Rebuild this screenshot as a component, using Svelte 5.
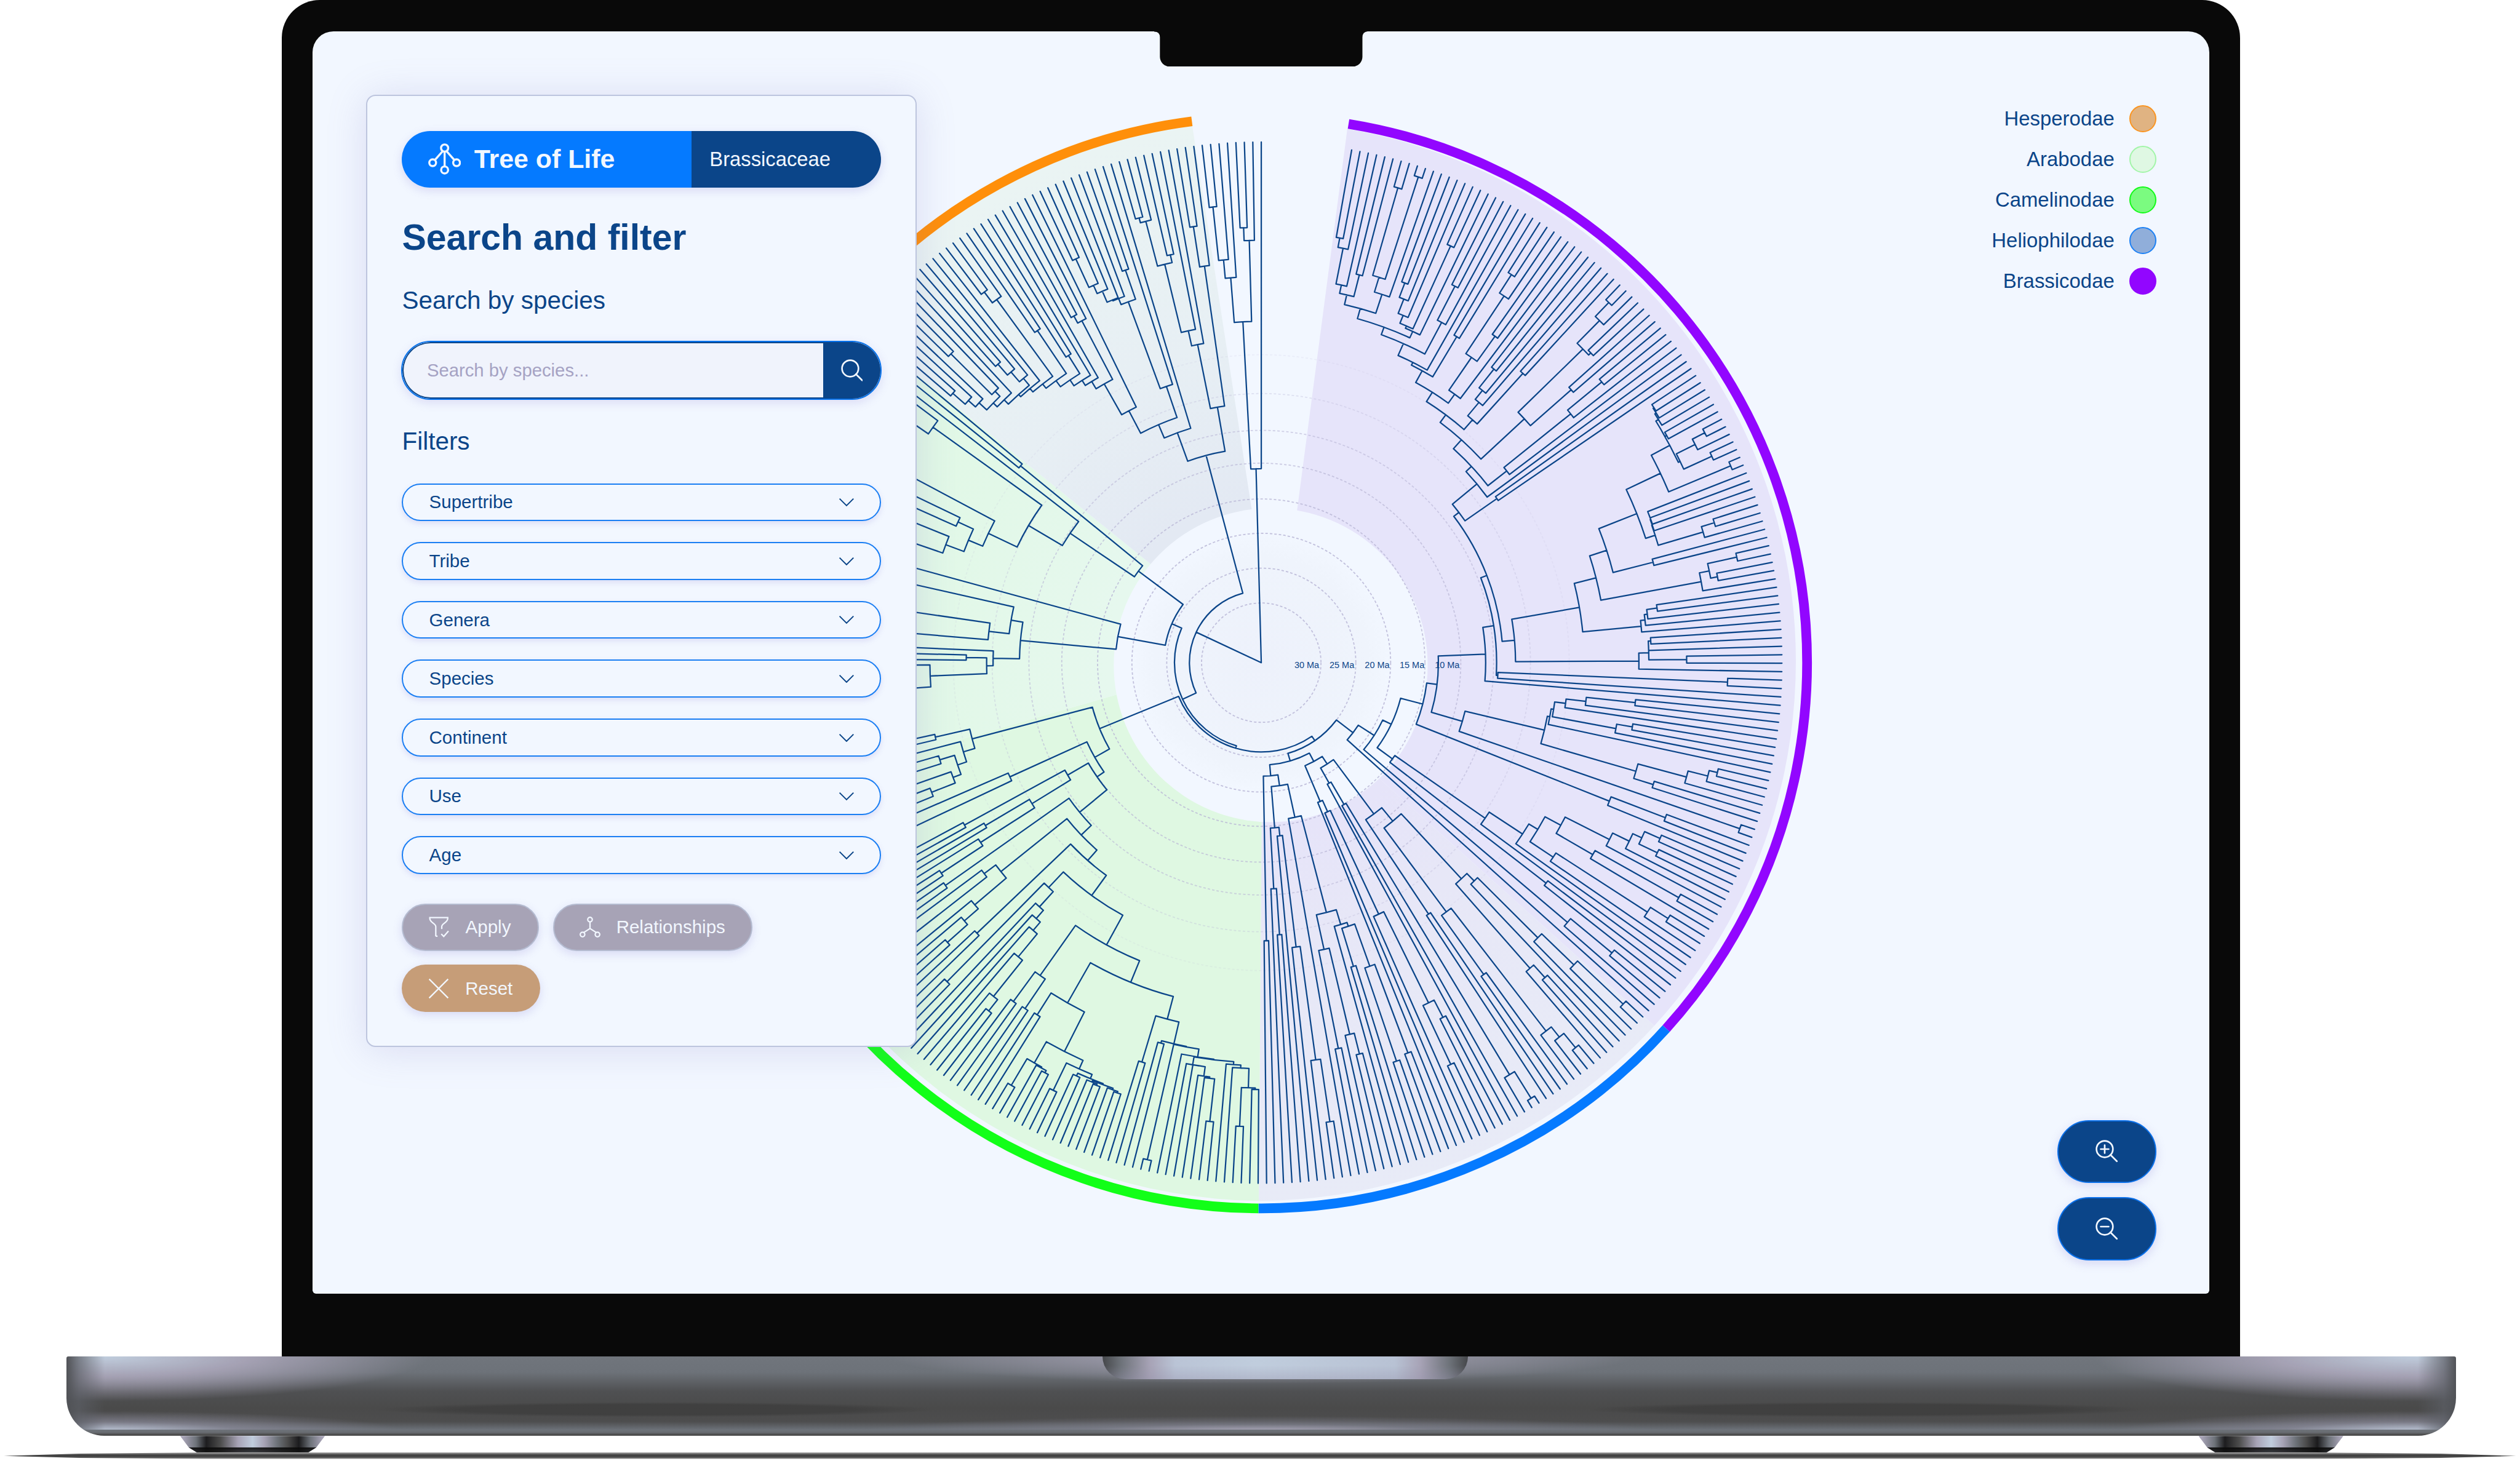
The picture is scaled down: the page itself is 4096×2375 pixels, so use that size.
<script>
  // Radial cladogram of the Brassicaceae family.
  // Notation: "o" is a leaf, "(ab)r" joins subtrees at radius r,
  // "@deg" is a leaf placed at an explicit clockwise angle.
  const LEAVES = 377;
  const START = 10;
  const STEP = 350 / (LEAVES - 1);
  const TIP = 1046.5;
  const CX = 2535;
  const CY = 1331;

  // Brassicodae, north-east
  const b1 = '((((oo)868o)849o)776(oo)804)759';
  const b2 = `(${b1}(((oo)993(oo)1026)810o)779)739`;
  const b3 = '(((((oo)816o)785o)754(oo)920)737o)732';
  const b4 = `(${b2}${b3})718`;
  const b5 = `(${b4}((oo)851o)774)702`;
  const b6 = `((${b5}o)676(oo)764)670`;
  const b7 = `(${b6}((((oo)928o)884(oo)807)745o)665)643`;
  const b8 = `(${b7}((((oo)753o)705o)682(oo)784)647)621`;
  const b9 = `(${b8}((((oo)1006o)967(oo)909)903(oo)830)721)602`;
  const b10 = `((${b9}(((oo)887o)798o)626)578o)563`;
  const b11 = `(${b10}(oo)577)499`;

  // Brassicodae, east
  const e1 = '((((((oo)941o)939o)936(oo)934)930(((oo)1004o)976(oo)996)934)930(oo)1023)888';
  const e2 = `(${e1}((((oo)834o)834o)833((oo)953o)926)832)812`;
  const e3 = `((${e2}(oo)813)730(((oo)979(oo)933)919o)899)694`;
  const e4 = `(${e3}((((oo)803o)782o)776o)767)649`;
  const e5 = `(${e4}((((oo)784o)779(oo)855)779o)759)511`;
  const b12 = `(((${b11}${e5})486((oo)938o)476)473o)451`;

  // Brassicodae, south-east
  const s1 = '((((oo)756o)657o)617((oo)757o)725)595';
  const s2 = `((${s1}o)590((((oo)943o)926o)885(oo)825)784)585`;
  const b13 = `(${b12}(${s2}(oo)1018)421)356`;
  const b14 = `(${b13}((oo)870o)753)335`;
  const s3 = '(((((((oo)876(oo)883)842o)822o)785((oo)963o)770)685(((oo)966o)924o)705)649o)628';
  const b15 = `(${b14}((${s3}o)548(oo)724)327)289`;
  const b16 = `((${b15}((oo)915o)807)270o)232`;

  // Heliophilodae
  const h1 = '(((((oo)1000o)874o)784o)613((oo)852o)818)592';
  const h2 = `((${h1}((((oo)999o)962o)936(oo)770)624)414(oo)607)379`;
  const h3 = `(${h2}((((oo)1030o)967o)330o)278)243`;
  const h4 = `(${h3}(((((oo)801(oo)893)762o)558o)328o)303)225`;
  const h5 = '((((oo)838(oo)846)648(oo)638)558o)550';
  const h6 = `((${h5}(((oo)811o)768(oo)791)590)519o)318`;
  const h7 = `(${h6}(((((oo)933o)806o)576o)350((oo)548o)455)333)250`;
  const b17 = `(${b16}(${h4}(${h7}(oo)559)228)206)190`;

  // Camelinodae
  const g1 = '((((oo)858(oo)933)855o)816o)810';
  const g2 = `(${g1}(((((oo)928o)842o)839o)820o)820)804`;
  const g3 = `(((${g2}o)803(oo)1025)787(oo)791)786`;
  const g4 = `(${g3}(oo)838)741`;
  const g5 = '((((((oo)912o)909((oo)912o)909)906(oo)910)904(oo)956)895(((oo)932o)927(oo)987)925)876';
  const g6 = `(${g4}(${g5}(oo)839)787)694`;
  const g7 = `(${g6}((oo)842(oo)844)770)647`;
  const g8 = '(((((((oo)889o)860o)767o)707o)685o)663(oo)900)622';
  const g9 = `((${g7}${g8})579(oo)789)529`;
  const g10 = `((${g9}((((oo)845o)791o)754((oo)900o)700)671)501(oo)777)473`;
  const g11 = `(${g10}((((oo)770o)670(oo)644)541(oo)680)450)402`;
  const g12 = `(${g11}((((oo)960o)930o)900o)555)385`;
  const g13 = '(((((oo)900o)712(oo)900)661((oo)900o)675)644(oo)900)625';
  const b18 = `(${b17}(${g12}(${g13}(oo)672)601)351)179.5`;

  // Arabodae
  const a1 = '(((@265.8@269.6)666(@270.5@271.5)593)552@272.5)539';
  const a2 = `((${a1}((@274.8@278.3)551@282.7)510)486@285.3)293`;
  const a3 = '((((@289@292)677(@294.1@295.7)672)638@298)607(@304.5@306.8)812)543';
  const a4 = `((${a3}@307.7)464(@308.8@309.7335)625)308`;
  const b19 = `(${b18}(${a2}${a4})196)174.5`;

  // Hesperodae
  const o1 = '((((oo)823o)790o)771((oo)880o)764)750';
  const o2 = `((${o1}o)739(((oo)800o)771o)745)727`;
  const o3 = `((${o2}o)721((oo)930o)903)712`;
  const o4 = `((((${o3}(oo)805)701(oo)729)686o)672o)660`;
  const o5 = `((${o4}((oo)792o)776)643o)572`;
  const o6 = '(((((((oo)893o)830o)812o)788o)786(oo)835)773o)587';
  const o7 = '((((oo)927o)917(oo)840)824o)683';
  const o8 = `((${o5}${o6})521o)492`;
  const b20 = `(${b19}(${o8}((${o7}o)652((oo)887o)805)521)431)144.5`;

  const outgroup = '(((((oo)921o)813o)776((oo)875o)849)686o)390';
  const newick = `(${b20}${outgroup})0`;

  const point = (r, deg) => {
    const a = (deg * Math.PI) / 180;
    return `${(CX + r * Math.sin(a)).toFixed(1)} ${(CY - r * Math.cos(a)).toFixed(1)}`;
  };

  function buildTree(text) {
    const stack = [[]];
    let cursor = START - STEP;
    let d = '';
    for (const t of text.match(/\(|\)[\d.]+|@[\d.]+|o/g)) {
      if (t === '(') {
        stack.push([]);
      } else if (t[0] === ')') {
        const r = Number(t.slice(1));
        const kids = stack.pop();
        for (const k of kids) d += `M${point(r, k.a)}L${point(k.r, k.a)}`;
        const from = kids[0].a;
        const to = kids[kids.length - 1].a;
        if (r > 0) d += `M${point(r, from)}A${r} ${r} 0 0 1 ${point(r, to)}`;
        stack[stack.length - 1].push({ r, a: (from + to) / 2 });
      } else {
        cursor = t === 'o' ? cursor + STEP : Number(t.slice(1));
        stack[stack.length - 1].push({ r: TIP, a: cursor });
      }
    }
    return d;
  }

  const treePath = buildTree(newick);

  const rings = [
    [120, 0.85], [190, 0.85], [260, 0.85], [329, 0.8], [401, 0.7],
    [467, 0.6], [541, 0.35], [619, 0.15]
  ];
  const ages = [
    ['30 Ma', 2626.5], ['25 Ma', 2697], ['20 Ma', 2768], ['15 Ma', 2838], ['10 Ma', 2908.7]
  ];
  const arc = (from, to) => `M${point(1097, from)}A1097 1097 0 0 1 ${point(1097, to)}`;

  const filters = ['Supertribe', 'Tribe', 'Genera', 'Species', 'Continent', 'Use', 'Age'];
  const legend = [
    ['Hesperodae', 'hesper'], ['Arabodae', 'arab'], ['Camelinodae', 'camel'],
    ['Heliophilodae', 'helio'], ['Brassicodae', 'brassic']
  ];
</script>

<div class="page">
  <div class="lid">
    <div class="screen">
      <svg class="tree" viewBox="629 62 3810 2538">
        <defs>
          <radialGradient id="hesper" gradientUnits="userSpaceOnUse" cx="2554" cy="1335" r="1090">
            <stop offset=".3" stop-color="#e3e9f3" /><stop offset=".6" stop-color="#e7eff4" /><stop offset="1" stop-color="#eaf4f3" />
          </radialGradient>
          <radialGradient id="arab" gradientUnits="userSpaceOnUse" cx="2554" cy="1335" r="1090">
            <stop offset=".3" stop-color="#e6f8ee" /><stop offset=".6" stop-color="#e2f8e8" /><stop offset="1" stop-color="#dff8e2" />
          </radialGradient>
          <radialGradient id="helio" gradientUnits="userSpaceOnUse" cx="2554" cy="1335" r="1090">
            <stop offset=".3" stop-color="#e6e4f9" /><stop offset=".5" stop-color="#e7e7f7" /><stop offset="1" stop-color="#e8ebf7" />
          </radialGradient>
          <radialGradient id="core" gradientUnits="userSpaceOnUse" cx="2535" cy="1331" r="265">
            <stop offset="0" stop-color="#edf1fb" /><stop offset=".8" stop-color="#eff4fc" /><stop offset="1" stop-color="#f2f7ff" />
          </radialGradient>
        </defs>
        <path fill="#e6e4fa" d="M2708 258A1086 1086 0 0 1 3325 2061L2740 1535L2600 1078Z" />
        <path fill="url(#helio)" d="M3325 2061A1084 1084 0 0 1 2530 2413L2536 1620L2740 1535Z" />
        <path fill="#dff8e2" d="M2530 2413A1085 1085 0 0 1 1497 1610L2290 1382L2536 1620Z" />
        <path fill="url(#arab)" d="M1497 1610A1090 1090 0 0 1 1692 630L2350 1163L2290 1382Z" />
        <path fill="url(#hesper)" d="M1692 630A1094 1094 0 0 1 2396 250L2522 1063L2350 1163Z" />
        <circle cx="2554" cy="1336" r="315.5" fill="#f2f7ff" />
        <circle cx="2535" cy="1331" r="262" fill="url(#core)" />

        {#each rings as [r, o]}
          <circle class="ring" cx={CX} cy={CY} {r} stroke-opacity={o} />
        {/each}

        <g class="band">
          <path stroke="#9206ff" d={arc(9.2, 132.1)} />
          <path stroke="#057aff" d={arc(132.1, 180.3)} />
          <path stroke="#12ff18" d={arc(180.3, 257.9)} />
          <path stroke="#8fff91" d={arc(257.9, 309.8)} />
          <path stroke="#ff8f0a" d={arc(309.8, 352.7)} />
        </g>
        <path class="branches" d={treePath} />
        {#each ages as [label, x]}
          <text class="age" {x} y="1341.500">{label}</text>
        {/each}
      </svg>

      <section class="panel">
        <header class="brand">
          <div class="brand-name">
            <svg class="brand-icon" viewBox="0 0 66 63">
              <path d="M29 16 13 34M37 16l16 18M33 17v29" />
              <circle cx="33" cy="9.500" r="7.200" /><circle cx="9" cy="39" r="6.800" />
              <circle cx="57" cy="39" r="6.800" /><circle cx="33" cy="53.500" r="7" />
            </svg>
            <strong>Tree of Life</strong>
          </div>
          <div class="brand-family">Brassicaceae</div>
        </header>
        <h1>Search and filter</h1>
        <h2>Search by species</h2>
        <div class="search">
          <span class="placeholder">Search by species...</span>
          <span class="search-go">
            <svg viewBox="0 0 44 44"><circle cx="18.500" cy="18.500" r="16.500" /><path d="M30 30 42.500 42.500" /></svg>
          </span>
        </div>
        <h2 class="filters-title">Filters</h2>
        <div class="filters">
          {#each filters as name}
            <div class="select">
              <span>{name}</span>
              <svg viewBox="0 0 32 18"><path d="M2 2 16 16 30 2" /></svg>
            </div>
          {/each}
        </div>
        <div class="actions">
          <button class="muted apply">
            <svg viewBox="0 0 42 42">
              <path d="M14 39.500V20C14 14 2 12 2 4V2H38V4C38 12 26 14 26 20V25M14 39.500H17.500M25 35l5 5 9.500-11" />
            </svg>
            Apply
          </button>
          <button class="muted relations">
            <svg viewBox="0 0 42 42">
              <circle cx="21" cy="6" r="4.600" /><circle cx="6" cy="36" r="4.600" /><circle cx="36" cy="36" r="4.600" />
              <path d="M21 10.600V24M21 24 8.500 32M21 24 33.500 32" />
            </svg>
            Relationships
          </button>
          <button class="reset">
            <svg viewBox="0 0 42 42"><path d="M2 2 40 40M40 2 2 40" /></svg>
            Reset
          </button>
        </div>
      </section>

      <aside>
        <ul class="legend">
          {#each legend as [name, kind]}
            <li>{name}<i class="dot {kind}"></i></li>
          {/each}
        </ul>
        <div class="zoom">
          <button>
            <svg viewBox="0 0 46 46"><circle cx="18.500" cy="18.500" r="16.500" /><path d="M30 30 43 43M10.500 18.500h16M18.500 10.500v16" /></svg>
          </button>
          <button>
            <svg viewBox="0 0 46 46"><circle cx="18.500" cy="18.500" r="16.500" /><path d="M30 30 43 43M10.500 18.500h16" /></svg>
          </button>
        </div>
      </aside>
      <svg class="notch" viewBox="0 0 430 71">
        <path d="M0 0H430V0Q418.500 .5 418.500 12V51A20 20 0 0 1 398.500 71H31.500A20 20 0 0 1 11.500 51V12Q11.500 .5 0 .5Z" />
      </svg>
    </div>
  </div>
  <div class="base"><div class="recess"></div></div>
  <div class="feet"><span class="foot"></span><span class="foot"></span></div>
  <div class="ground"></div>
</div>

<style>
  /* 1rem equals 10 design units; the design is 5064 units wide. */
  :global(html) { font-size: calc(100vw / 506.4); }
  :global(body) { margin: 0; background: #fff; overflow: hidden; }

  .page {
    display: flex; flex-direction: column; position: relative;
    width: 506.4rem; height: 293.6rem; overflow: hidden; background: #fff;
    font-family: "Liberation Sans", Arial, sans-serif; color: #0b4589;
  }
  .lid {
    box-sizing: border-box; width: 393.6rem; height: 272.6rem; margin-left: 56.6rem;
    padding: 6.25rem 6.25rem 12.6rem; background: #090909; border-radius: 7.6rem 7.6rem 0 0;
  }
  .screen {
    position: relative; display: flex; justify-content: space-between; box-sizing: border-box;
    height: 253.75rem; padding: 12.8rem 10.6rem 6.7rem 10.7rem; overflow: hidden;
    background: #f2f7ff; border-radius: 4.2rem 4.2rem .7rem .7rem;
  }
  .tree { position: absolute; inset: 0; width: 100%; height: 100%; }
  .notch { position: absolute; top: 0; left: 169.05rem; width: 43rem; height: 7.1rem; fill: #090909; }

  .ring { fill: none; stroke: #b9b6d6; stroke-width: 2.2; stroke-dasharray: 5 4; }
  .band { fill: none; stroke-width: 19.5; }
  .branches { fill: none; stroke: #0b4589; stroke-width: 2.8; stroke-linejoin: round; stroke-linecap: round; }
  .age { font-size: 17.9px; text-anchor: middle; fill: #0b4589; }

  .panel {
    position: relative; box-sizing: border-box; width: 110.7rem; height: 191.4rem;
    padding: 7rem 7rem 0 7rem; border: .25rem solid #bdc5de; border-radius: 1.9rem;
    background: #f2f7ff; box-shadow: 0 .6rem 8rem rgba(120, 115, 190, .2);
  }
  .brand {
    display: flex; height: 11.4rem; border-radius: 5.7rem; overflow: hidden;
    box-shadow: 0 .6rem 2rem rgba(110, 100, 200, .2);
  }
  .brand-name {
    display: flex; align-items: center; box-sizing: border-box; width: 58.2rem; padding-left: 5.2rem;
    gap: 2.7rem; background: #057aff; color: #f2f7ff; font-size: 5.3rem;
  }
  .brand-icon { width: 6.6rem; height: 6.3rem; fill: none; stroke: #f2f7ff; stroke-width: 4.2; }
  .brand-family {
    display: flex; align-items: center; flex: 1; padding-left: 3.6rem;
    background: #0b4589; color: #f2f7ff; font-size: 4.05rem;
  }
  h1 { margin: 5.85rem 0 0; font-size: 7.29rem; line-height: 8.4rem; font-weight: 700; }
  h2 { margin: 5.4rem 0 0; font-size: 5rem; line-height: 6rem; font-weight: 400; }
  .search {
    display: flex; align-items: stretch; box-sizing: border-box; height: 11.9rem; margin: 5.15rem -.15rem 0;
    border: .25rem solid #0672ec; border-radius: 6rem; background: #f0f3fc; overflow: hidden;
    box-shadow: 0 .6rem 2rem rgba(110, 100, 200, .18);
  }
  .placeholder {
    display: flex; align-items: center; flex: 1; padding-left: 4.65rem; font-size: 3.62rem; color: #a5a2c3;
    border: .25rem solid #0b4589; border-right: 0; border-radius: 6rem 0 0 6rem;
  }
  .search-go { display: flex; align-items: center; justify-content: center; width: 11.5rem; background: #0b4589; }
  .search-go svg { width: 4.4rem; height: 4.4rem; fill: none; stroke: #f2f7ff; stroke-width: 3.3; stroke-linecap: round; }
  .filters-title { margin-top: 5.25rem; }
  .filters { display: flex; flex-direction: column; gap: 4.22rem; margin-top: 5.5rem; }
  .select {
    display: flex; align-items: center; justify-content: space-between; box-sizing: border-box; height: 7.6rem;
    padding: 0 5rem 0 5.2rem; border: .25rem solid #1a7ef3; border-radius: 3.8rem;
    font-size: 3.65rem; box-shadow: 0 .5rem 1.2rem rgba(110, 100, 200, .17);
  }
  .select svg { width: 3.2rem; height: 1.8rem; fill: none; stroke: #0b4589; stroke-width: 2.5; }
  .actions { display: flex; flex-wrap: wrap; gap: 2.7rem 2.8rem; margin-top: 5.95rem; }
  button { margin: 0; border: 0; font: inherit; color: #f2f7ff; }
  .actions button {
    display: flex; align-items: center; box-sizing: border-box; height: 9.55rem; border-radius: 4.8rem;
    padding: 0 0 0 5.1rem; gap: 3.2rem; font-size: 3.65rem; box-shadow: 0 .6rem 1.8rem rgba(110, 100, 200, .2);
  }
  .actions svg { width: 4.2rem; height: 4.2rem; fill: none; stroke: #f2f7ff; stroke-width: 2.8; }
  .actions .muted { background: #a7a3b6; border: .25rem solid #b4bbd0; }
  .actions .apply { width: 27.5rem; }
  .actions .relations { width: 40.1rem; }
  .actions .reset { width: 27.8rem; padding-left: 5.3rem; background: #c69d78; }

  aside { position: relative; display: flex; flex-direction: column; justify-content: space-between; align-items: flex-end; }
  .legend { display: flex; flex-direction: column; gap: 2.67rem; margin: 2.05rem 0 0; padding: 0; list-style: none; }
  .legend li {
    display: flex; align-items: center; justify-content: flex-end; gap: 2.95rem;
    height: 5.5rem; font-size: 4.07rem;
  }
  .dot { box-sizing: border-box; width: 5.5rem; height: 5.5rem; border-radius: 50%; border: .3rem solid; }
  .dot.hesper { background: #e0b382; border-color: #fb9420; }
  .dot.arab { background: #dff8e3; border-color: #a2f5a8; }
  .dot.camel { background: #7bfb80; border-color: #12fb18; }
  .dot.helio { background: #90aeda; border-color: #1b80f5; }
  .dot.brassic { background: #9206ff; border-color: #9206ff; }
  .zoom { display: flex; flex-direction: column; gap: 2.8rem; }
  .zoom button {
    display: flex; align-items: center; justify-content: center; box-sizing: border-box;
    width: 19.95rem; height: 12.7rem; border: .25rem solid #0a70ea; border-radius: 6.35rem; background: #0b4589;
    box-shadow: 0 .6rem 2rem rgba(110, 100, 200, .22);
  }
  .zoom svg { width: 4.6rem; height: 4.6rem; fill: none; stroke: #f2f7ff; stroke-width: 3.3; stroke-linecap: round; }

  .base {
    display: flex; width: 480.3rem; height: 16rem; margin-left: 13.3rem;
    border-radius: .4rem .4rem 7.6rem 7.6rem; overflow: hidden;
    background:
      linear-gradient(180deg, transparent 92.5%, #6d7279 92.6%, #686b70 96%, #4b4b4b 98.5%),
      linear-gradient(90deg, #505256 0, rgba(92, 95, 102, .7) .5%, transparent 1.6%, transparent 98.4%, rgba(92, 95, 102, .7) 99.5%, #505256 100%),
      radial-gradient(ellipse 65rem 9rem at 1.6% 0, #c0cddd 0, rgba(167, 163, 182, .95) 45%, transparent 100%),
      radial-gradient(ellipse 65rem 9rem at 98.4% 0, #c0cddd 0, rgba(167, 163, 182, .95) 45%, transparent 100%),
      radial-gradient(ellipse 75rem 5.5rem at 50% 0, #aeabbe 0, rgba(150, 149, 164, .8) 50%, transparent 100%),
      radial-gradient(ellipse 60rem 4rem at 1.6% 94%, #bcc5d6 0, rgba(140, 140, 156, .7) 45%, transparent 100%),
      radial-gradient(ellipse 60rem 4rem at 98.4% 94%, #bcc5d6 0, rgba(140, 140, 156, .7) 45%, transparent 100%),
      radial-gradient(ellipse 80rem 3rem at 50% 94%, #aaa6b8 0, rgba(130, 131, 145, .6) 45%, transparent 100%),
      radial-gradient(ellipse 56rem 1.5rem at 24.7% 67%, rgba(60, 60, 60, .75) 70%, transparent 100%),
      radial-gradient(ellipse 56rem 1.5rem at 75.3% 67%, rgba(60, 60, 60, .75) 70%, transparent 100%),
      linear-gradient(180deg, #70757c 0, #6d7279 20%, #4f5052 44%, #4a4a4a 65%, #4d4d4e 82%, #6b7077 92%);
  }
  .recess {
    width: 73.5rem; height: 4.6rem; margin-left: 208.2rem; border-radius: 0 0 4.6rem 4.6rem;
    background:
      linear-gradient(180deg, transparent 40%, rgba(150, 146, 170, .35) 100%),
      linear-gradient(90deg, #45474a 0, #6d7279 5%, #a7a3b6 13%, #bac4d6 20%, #c0cddd 42%, #b8c2d4 80%, #a7a3b6 87%, #6d7279 95%, #45474a 100%);
  }
  .feet { display: flex; justify-content: space-between; margin: 0 35.5rem 0 36.2rem; height: 3.4rem; }
  .foot {
    width: 29.1rem; clip-path: polygon(0 0, 100% 0, 94% 68%, 88% 100%, 12% 100%, 6% 68%);
    background:
      linear-gradient(180deg, transparent 66%, rgba(8, 8, 8, .9) 68%, rgba(20, 20, 20, .75) 100%),
      linear-gradient(90deg, #a7a3b6 2%, #6d7279 11%, #1d1d1f 18%, #4d4d4d 28%, #a7a3b6 40%, #c0cddd 50%, #a7a3b6 58%, #6d7279 67%, #4d4d4d 74%, #1b1b1d 82%, #6d7279 90%, #a7a3b6 98%);
  }
  .ground {
    height: 1.3rem; margin: -.1rem .8rem 0;
    background: linear-gradient(180deg, #b5b5b5 0, #565656 28%, #3d3d3d 50%, #565656 75%, #b5b5b5 100%);
    clip-path: polygon(0 55%, 3% 20%, 8% 0, 92% 0, 97% 20%, 100% 55%, 97% 85%, 92% 100%, 8% 100%, 3% 85%);
  }
</style>
